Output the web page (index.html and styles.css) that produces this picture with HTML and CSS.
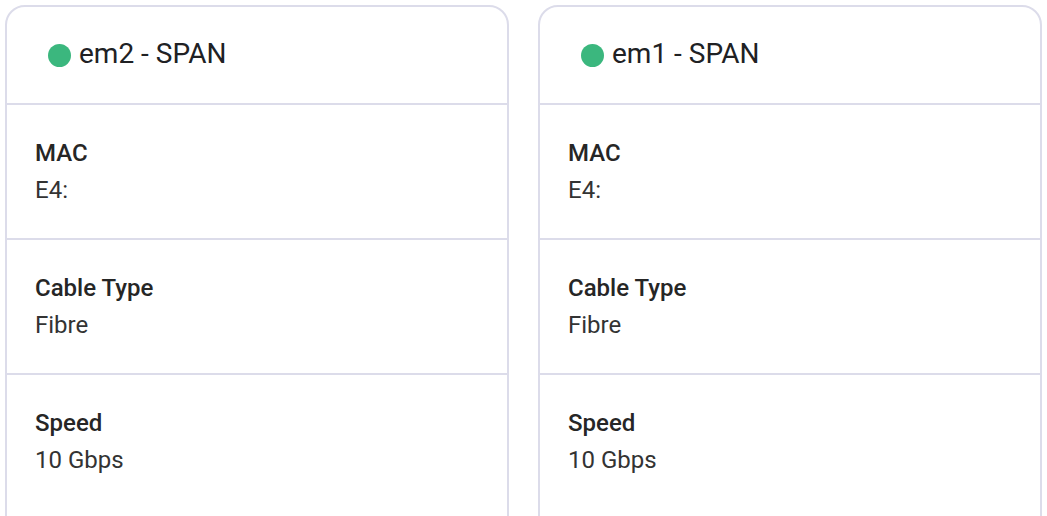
FILE: index.html
```html
<!DOCTYPE html>
<html>
<head>
<meta charset="utf-8">
<link rel="stylesheet" href="styles.css">
</head>
<body>
<div class="grid">
  <section class="card">
    <header class="card-head">
      <span class="dot"></span>
      <span class="title">em2 - SPAN</span>
    </header>
    <div class="row">
      <div class="label">MAC</div>
      <div class="value">E4:</div>
    </div>
    <div class="row">
      <div class="label">Cable Type</div>
      <div class="value">Fibre</div>
    </div>
    <div class="row last">
      <div class="label">Speed</div>
      <div class="value">10 Gbps</div>
    </div>
  </section>
  <section class="card">
    <header class="card-head">
      <span class="dot"></span>
      <span class="title">em1 - SPAN</span>
    </header>
    <div class="row">
      <div class="label">MAC</div>
      <div class="value">E4:</div>
    </div>
    <div class="row">
      <div class="label">Cable Type</div>
      <div class="value">Fibre</div>
    </div>
    <div class="row last">
      <div class="label">Speed</div>
      <div class="value">10 Gbps</div>
    </div>
  </section>
</div>
</body>
</html>
```
FILE: styles.css
```css
html, body {
  margin: 0;
  padding: 0;
  background: #ffffff;
  overflow: hidden;
}
body {
  font-family: Roboto, "Noto Sans", Arial, sans-serif;
  color: #222222;
}
.grid {
  display: grid;
  grid-template-columns: 504px 504px;
  column-gap: 29px;
  padding: 5px 0 0 5px;
}
.card {
  border: 2px solid #dcdcea;
  border-radius: 20px;
  min-height: 600px;
  box-sizing: border-box;
}
.card-head {
  height: 96px;
  border-bottom: 2px solid #dcdcea;
  display: flex;
  align-items: center;
  padding-left: 41px;
  gap: 8px;
}
.dot {
  width: 23px;
  height: 23px;
  border-radius: 50%;
  background: #3bb77e;
  flex: none;
}
.title {
  font-size: 28px;
  line-height: 36px;
  color: #202124;
  margin-top: -3px;
}
.row {
  height: 135px;
  box-sizing: border-box;
  padding: 30px 28px 0;
  border-bottom: 2px solid #dcdcea;
}
.row.last {
  border-bottom: none;
}
.label {
  font-size: 24px;
  font-weight: 500;
  line-height: 36px;
  color: #262626;
}
.value {
  font-size: 24px;
  line-height: 36px;
  margin-top: 1px;
  color: #333333;
}
```
